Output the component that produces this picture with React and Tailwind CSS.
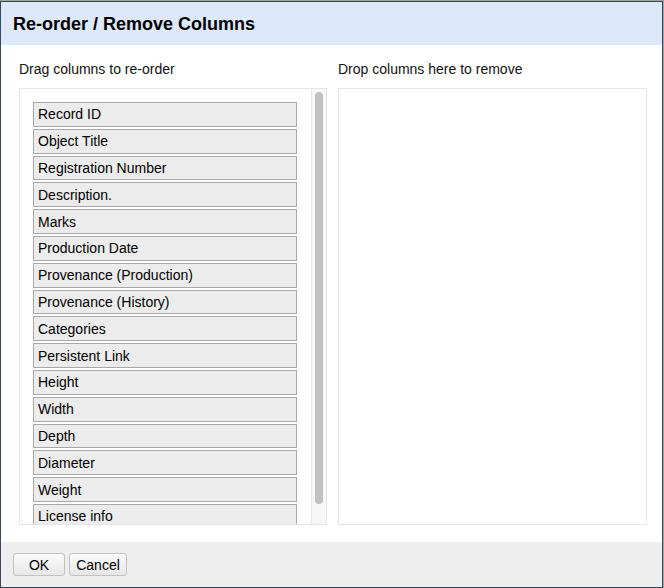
import React from "react";

const columns = [
  "Record ID",
  "Object Title",
  "Registration Number",
  "Description.",
  "Marks",
  "Production Date",
  "Provenance (Production)",
  "Provenance (History)",
  "Categories",
  "Persistent Link",
  "Height",
  "Width",
  "Depth",
  "Diameter",
  "Weight",
  "License info",
];

export default function App() {
  return (
    <div
      className="w-[664px] h-[588px] bg-[#a3a3a3] pt-[1px] overflow-hidden"
      style={{ fontFamily: '"Liberation Sans", Arial, sans-serif' }}
    >
      <div className="w-[663px] h-[587px] border border-[#34495e] bg-white flex flex-col">
        {/* header */}
        <div className="h-[43px] bg-[#dde9fb] flex items-center px-[12px] shrink-0">
          <h1 className="text-[18px] font-bold text-black leading-none">Re-order / Remove Columns</h1>
        </div>

        {/* body */}
        <div className="h-[497px] shrink-0 flex gap-[11px] pl-[18px] pt-[16px]">
          <div className="w-[308px] flex flex-col">
            <div className="text-[14px] text-[#111] leading-[16px] h-[27px]">Drag columns to re-order</div>
            <div className="h-[437px] border border-[#e6e6e6] flex overflow-hidden">
              <div className="flex-1 min-w-0 pl-[13px] pr-[14px] pt-[13px] flex flex-col gap-[2px] overflow-hidden">
                {columns.map((c) => (
                  <div
                    key={c}
                    className="h-[24.8px] shrink-0 bg-[#ececec] border border-[#a8a8a8] px-[4px] flex items-center text-[14px] text-black leading-none"
                  >
                    {c}
                  </div>
                ))}
              </div>
              <div className="w-[15px] bg-[#f7f7f7] border-l border-[#e8e8e8] pt-[3px] flex justify-center shrink-0">
                <div className="w-[8px] h-[412px] rounded-full bg-[#c1c1c1]" />
              </div>
            </div>
          </div>

          <div className="w-[309px] flex flex-col">
            <div className="text-[14px] text-[#111] leading-[16px] h-[27px]">Drop columns here to remove</div>
            <div className="h-[437px] border border-[#e6e6e6]" />
          </div>
        </div>

        {/* footer */}
        <div className="flex-1 bg-[#eeeeee] flex items-center gap-[4px] px-[12px]">
          <button className="w-[52px] h-[23px] rounded-[3px] border border-[#c2c2c2] bg-gradient-to-b from-[#fbfbfb] to-[#e7e7e7] text-[14px] text-black leading-none">
            OK
          </button>
          <button className="w-[58px] h-[23px] rounded-[3px] border border-[#c2c2c2] bg-gradient-to-b from-[#fbfbfb] to-[#e7e7e7] text-[14px] text-black leading-none">
            Cancel
          </button>
        </div>
      </div>
    </div>
  );
}
